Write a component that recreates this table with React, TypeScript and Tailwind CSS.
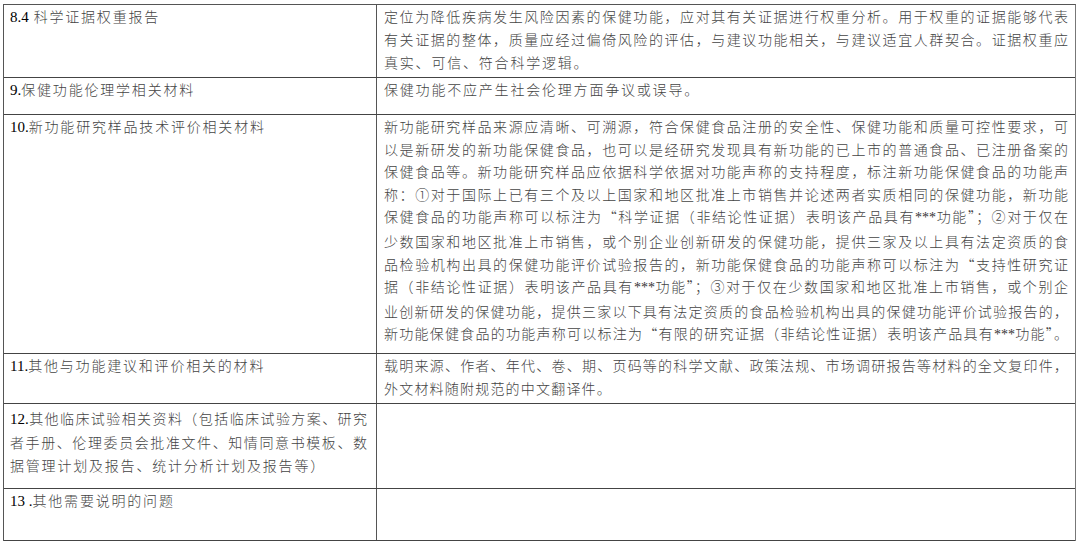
import React from 'react';

type Row = {
  height: string;
  left: string[];
  right: string[];
  rightFullCount: number;
  leftFullCount: number;
  lead: string;
  small?: boolean;
  padTop?: boolean;
};

const rows: Row[] = [
  {
    height: 'h-[73px]',
    lead: 'leading-[23px]',
    left: ['8.4 科学证据权重报告'],
    leftFullCount: 0,
    right: [
      '定位为降低疾病发生风险因素的保健功能，应对其有关证据进行权重分析。用于权重的证据能够代表',
      '有关证据的整体，质量应经过偏倚风险的评估，与建议功能相关，与建议适宜人群契合。证据权重应',
      '真实、可信、符合科学逻辑。',
    ],
    rightFullCount: 2,
  },
  {
    height: 'h-[37px]',
    lead: 'leading-[23px]',
    left: ['9.保健功能伦理学相关材料'],
    leftFullCount: 0,
    right: ['保健功能不应产生社会伦理方面争议或误导。'],
    rightFullCount: 0,
  },
  {
    height: 'h-[239px]',
    lead: 'leading-[22.6px]',
    left: ['10.新功能研究样品技术评价相关材料'],
    leftFullCount: 0,
    right: [
      '新功能研究样品来源应清晰、可溯源，符合保健食品注册的安全性、保健功能和质量可控性要求，可',
      '以是新研发的新功能保健食品，也可以是经研究发现具有新功能的已上市的普通食品、已注册备案的',
      '保健食品等。新功能研究样品应依据科学依据对功能声称的支持程度，标注新功能保健食品的功能声',
      '称：①对于国际上已有三个及以上国家和地区批准上市销售并论述两者实质相同的保健功能，新功能',
      '保健食品的功能声称可以标注为“科学证据（非结论性证据）表明该产品具有***功能”；②对于仅在',
      '少数国家和地区批准上市销售，或个别企业创新研发的保健功能，提供三家及以上具有法定资质的食',
      '品检验机构出具的保健功能评价试验报告的，新功能保健食品的功能声称可以标注为“支持性研究证',
      '据（非结论性证据）表明该产品具有***功能”；③对于仅在少数国家和地区批准上市销售，或个别企',
      '业创新研发的保健功能，提供三家以下具有法定资质的食品检验机构出具的保健功能评价试验报告的，',
      '新功能保健食品的功能声称可以标注为“有限的研究证据（非结论性证据）表明该产品具有***功能”。',
    ],
    rightFullCount: 10,
  },
  {
    height: 'h-[50px]',
    lead: 'leading-[23px]',
    left: ['11.其他与功能建议和评价相关的材料'],
    leftFullCount: 0,
    right: [
      '载明来源、作者、年代、卷、期、页码等的科学文献、政策法规、市场调研报告等材料的全文复印件，',
      '外文材料随附规范的中文翻译件。',
    ],
    rightFullCount: 1,
    small: true,
  },
  {
    height: 'h-[85px]',
    lead: 'leading-[23px]',
    left: [
      '12.其他临床试验相关资料（包括临床试验方案、研究',
      '者手册、伦理委员会批准文件、知情同意书模板、数',
      '据管理计划及报告、统计分析计划及报告等）',
    ],
    leftFullCount: 2,
    right: [],
    rightFullCount: 0,
    padTop: true,
  },
  {
    height: 'h-[52px]',
    lead: 'leading-[23px]',
    left: ['13 .其他需要说明的问题'],
    leftFullCount: 0,
    right: [],
    rightFullCount: 0,
  },
];

// digits and *** are set in a Times-like face, the rest in the CJK face
function Rich({ text }: { text: string }) {
  const parts = text.split(/([0-9][0-9.]*(?: \.)?|\*\*\*)/);
  return (
    <>
      {parts.map((p, i) =>
        i % 2 === 1 ? (
          p === '***' ? (
            <span key={i} className="font-['Liberation_Serif',serif] text-[14px] text-[#333] tracking-normal">
              {p}
            </span>
          ) : (
            <span key={i} className="font-['Liberation_Serif',serif] text-[15px] text-black tracking-normal">
              {p}
            </span>
          )
        ) : (
          <React.Fragment key={i}>{p}</React.Fragment>
        )
      )}
    </>
  );
}

function Lines({ lines, fullCount, small }: { lines: string[]; fullCount: number; small?: boolean }) {
  return (
    <>
      {lines.map((line, i) =>
        i < fullCount ? (
          <div key={i} className="whitespace-nowrap text-justify [text-align-last:justify] tracking-[1px]">
            <Rich text={line} />
          </div>
        ) : (
          <div key={i} className={small ? 'whitespace-nowrap tracking-[1.2px]' : 'whitespace-nowrap tracking-[1.8px]'}>
            <Rich text={line} />
          </div>
        )
      )}
    </>
  );
}

export default function App() {
  return (
    <div className="w-[1080px] h-[543px] bg-white pt-[4px] pl-[3px] font-['Noto_Sans_CJK_SC',sans-serif] text-[14px] font-light text-[#444]">
      <div className="w-[1073px] border-t border-l border-r border-t-[#555] border-l-[#555] border-r-[#777]">
        {rows.map((row, idx) => (
          <div key={idx} className={`flex border-b border-[#444] ${row.height} ${row.lead}`}>
            <div className={`w-[373px] shrink-0 border-r border-[#555] pl-[6px] pr-[8px] ${row.padTop ? 'pt-[3px]' : ''}`}>
              <Lines lines={row.left} fullCount={row.leftFullCount} />
            </div>
            <div className="flex-1 pl-[7px] pr-[6px]">
              <Lines lines={row.right} fullCount={row.rightFullCount} small={row.small} />
            </div>
          </div>
        ))}
      </div>
    </div>
  );
}
